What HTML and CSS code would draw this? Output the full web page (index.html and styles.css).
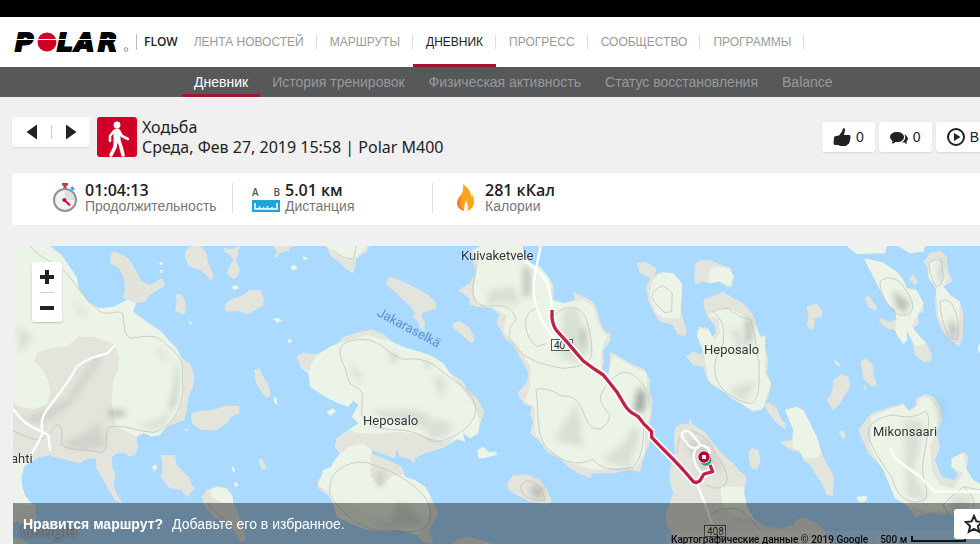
FILE: index.html
```
<!DOCTYPE html>
<html lang="ru">
<head>
    <meta charset="UTF-8">
    <meta name="viewport" content="width=device-width, initial-scale=1.0">
    <title>Polar Flow</title>
    <link rel="stylesheet" href="styles.css">
</head>
<body>
    <div class="top-strip"></div>

    <header class="header">
        <a href="#" class="logo" aria-label="Polar Flow">
            <svg class="logo-mark" width="116" height="24" viewBox="0 0 116 24">
                <text class="logo-text" x="1 43 61 84" y="21">PLAR</text>
                <circle cx="33" cy="12" r="9.500" fill="#d10027"/>
                <path d="M0 9.500H112" stroke="#fff" stroke-width="1.200"/>
                <circle cx="112" cy="19.500" r="1.800" fill="none" stroke="#777" stroke-width=".8"/>
            </svg>
            <span class="logo-flow">FLOW</span>
        </a>
        <nav class="main-nav">
            <a href="#">ЛЕНТА НОВОСТЕЙ</a>
            <a href="#">МАРШРУТЫ</a>
            <a href="#" class="active">ДНЕВНИК</a>
            <a href="#">ПРОГРЕСС</a>
            <a href="#">СООБЩЕСТВО</a>
            <a href="#">ПРОГРАММЫ</a>
        </nav>
    </header>

    <nav class="sub-nav">
        <a href="#" class="active">Дневник</a>
        <a href="#">История тренировок</a>
        <a href="#">Физическая активность</a>
        <a href="#">Статус восстановления</a>
        <a href="#">Balance</a>
    </nav>

    <main class="content">
        <div class="session-header">
            <div class="pager">
                <button type="button" aria-label="Назад"><svg width="12" height="16" viewBox="0 0 12 16"><path d="M11 .5V15.500L.5 8Z" fill="#222"/></svg></button>
                <button type="button" aria-label="Вперёд"><svg width="12" height="16" viewBox="0 0 12 16"><path d="M1 .5V15.500L11.500 8Z" fill="#222"/></svg></button>
            </div>
            <div class="sport-icon">
                <svg width="40" height="40" viewBox="0 0 40 40">
                    <circle cx="20" cy="8" r="3.400" fill="#fff"/>
                    <g fill="none" stroke="#fff" stroke-linecap="round" stroke-linejoin="round">
                        <path d="M20 15V23" stroke-width="7"/>
                        <path d="M17 14L13 19L13 24M22 14L25 19L31 22" stroke-width="2.600"/>
                        <path d="M18.500 24L18 30L14 38M22 24L24 30L26 38" stroke-width="3.600"/>
                    </g>
                </svg>
            </div>
            <h1 class="session-title">Ходьба<br>Среда, Фев 27, 2019 15:58 | Polar M400</h1>
            <div class="actions">
                <button type="button">
                    <svg width="18" height="18" viewBox="0 0 18 18"><path d="M1 10Q1 8 3 8L6 7.500L9 3.500L10 .5Q12.500-.5 12 2.500L11 7H16Q18 7 17.300 9Q18 10 17 11.500Q17.500 13 16.300 14Q16.500 16 14.500 16.500L13 18H7L5.500 17H2Q.5 17 .5 15Z" fill="#222"/></svg>
                    0
                </button>
                <button type="button">
                    <svg width="18" height="18" viewBox="0 0 18 18"><path d="M7 4C3 4 0 6 0 9Q0 11 2.500 13Q2.500 14.500 1.500 15.500Q4 15.500 5.500 14C11 14.500 14 12 14 9C14 6 11 4 7 4Z" fill="#222"/><path d="M14.500 6Q17.500 8 18 10.500Q18 12 16.500 13.500Q16.500 15 17 16Q15 15.500 14 14.300Q12.500 14.600 11.500 14.500Q17 12 14.500 6Z" fill="#222"/></svg>
                    0
                </button>
                <button type="button">
                    <svg width="18" height="18" viewBox="0 0 18 18"><circle cx="9" cy="9" r="8" fill="none" stroke="#222" stroke-width="2"/><path d="M7 5V13L13.500 9Z" fill="#222"/></svg>
                    В
                </button>
            </div>
        </div>

        <div class="summary">
            <div class="stat">
                <svg width="28" height="30" viewBox="0 0 28 30">
                    <path d="M10 1H16M13 1V5" stroke="#b83a4e" stroke-width="3"/>
                    <path d="M19.500 6.500L21.500 4.500" stroke="#1fa9d8" stroke-width="3.500"/>
                    <circle cx="13" cy="17" r="11" fill="#f1f2f2" stroke="#8e9193" stroke-width="2"/>
                    <path d="M13 7.500A9.500 9.500 0 0 1 22.500 17L13 17Z" fill="#dcdedf"/>
                    <path d="M12 16.500L18 22.500" stroke="#d10042" stroke-width="2"/>
                    <circle cx="12.300" cy="17" r="2" fill="#d10042"/>
                </svg>
                <div><strong>01:04:13</strong><span>Продолжительность</span></div>
            </div>
            <div class="stat">
                <div class="ruler">
                    <span>A</span><span>B</span>
                    <svg width="28" height="12" viewBox="0 0 28 12"><path d="M0 0H28V12H0Z" fill="#1fa3d8"/><path d="M3 3V9H25V3M7.500 6V9M11.500 7V9M15.500 6V9M20 7V9" fill="none" stroke="#fff" stroke-width="1.500"/></svg>
                </div>
                <div><strong>5.01 км</strong><span>Дистанция</span></div>
            </div>
            <div class="stat">
                <svg width="28" height="30" viewBox="0 0 28 30"><path d="M11 1C17 6 20 10 19 15L20.500 12C24 20 21 26 15.500 28Q17 24 15 20L14 17Q12 22 12 28C5 26 3 20 7 15C10 11 12 7 11 1Z" fill="#f8a51b"/><path d="M5 20Q6 15 9 12Q10 17 8.500 20Q8 24 12 28Q6 26 5 20Z" fill="#f4812a"/></svg>
                <div><strong>281 кКал</strong><span>Калории</span></div>
            </div>
        </div>

        <section class="map">
            <!-- three drawing units per screen pixel -->
            <svg class="map-canvas" viewBox="39 18 2901 894" preserveAspectRatio="xMinYMin slice">
                <defs>
                    <filter id="soft" x="-50%" y="-50%" width="200%" height="200%"><feGaussianBlur stdDeviation="9"/></filter>
                </defs>

                <!-- west: mainland and skerries -->
                <g>
                    <path class="land" d="M39 18L150 18 185 45 205 75 230 110 237 145 265 185 298 205 340 200 385 178 408 190 400 215 420 230 440 245 485 275 505 300 530 325 545 355 572 375 583 410 578 440 565 470 560 510 552 540 530 548 500 560 480 585 455 590 430 580 410 590 413 620 405 645 385 648 370 637 350 640 335 650 335 680 345 700 340 740 352 765 365 788 345 780 325 745 305 710 290 685 288 655 265 655 235 670 210 660 180 655 150 645 120 650 95 665 72 680 65 710 67 740 75 765 90 785 107 800 108 835 100 850 75 850 39 845Z"/>
                    <path class="sand" d="M108 340L150 325 200 320 235 290 280 290 315 300 345 315 358 350 355 390 340 420 335 480 340 520 350 560 410 590 413 620 405 645 385 648 370 637 350 640 335 650 335 680 345 700 340 740 352 765 365 788 345 780 325 745 305 710 290 685 288 655 265 655 235 670 180 655 150 645 120 650 95 665 39 650 39 490 60 500 100 508 140 495 150 460 145 420 120 380 105 365ZM545 355L572 375 583 410 578 440 565 470 560 510 552 540 500 560 535 520 550 480 552 400ZM108 800L108 835 100 850 39 845 39 790Z"/>
                    <path class="sand" d="M332 45L340 33 380 50 395 70 412 100 425 125 450 135 485 115 495 130 490 142 465 155 450 165 435 185 405 190 385 180 370 175 375 150 370 110 355 85 330 70ZM558 30L575 18 600 18 620 40 625 70 640 105 635 122 620 105 600 90 580 85 565 75 555 50ZM668 22L695 28 718 18 712 45 708 60 720 90 712 110 700 118 680 100 690 75 700 60 690 45 675 35ZM820 18L875 18 865 32 840 38 830 52 822 50 832 35ZM675 195L690 180 730 165 750 150 780 150 792 175 790 195 765 210 740 222 715 212 680 215 673 205ZM528 165L535 160 550 170 558 200 555 220 545 222 525 212 530 190ZM762 390L778 385 790 410 805 435 813 465 800 475 785 455 768 430ZM575 520L600 512 640 510 670 498 718 497 718 520 695 530 680 550 650 570 605 570 580 555 573 540ZM482 645L525 645 530 675 550 695 570 715 575 735 585 748 575 755 560 772 545 750 510 745 495 730 482 710 488 685ZM775 660L785 655 800 685 785 690ZM39 890L80 905 85 912 39 912Z"/>
                    <path class="sand" d="M605 770L620 750 650 738 680 745 697 765 700 790 715 820 730 860 738 900 720 905 700 870 680 850 640 830 615 800Z"/>
                    <path class="land" d="M630 750L655 740 682 748 697 768 700 790 660 785 635 770ZM695 140L710 135 718 145 702 150ZM820 237L835 233 845 242 832 248ZM870 80L885 75 893 85 878 93ZM908 53L920 52 922 58 912 59ZM862 300L872 297 875 305 865 310ZM478 66L488 66 488 74 479 74ZM480 90L490 90 488 100 481 98ZM566 243L575 245 572 256ZM820 470L830 475 832 495 823 488ZM455 680L468 672 472 685 462 695ZM695 680L702 682 706 696 698 695ZM702 728L710 725 715 738 705 740ZM553 570L562 566 565 573Z"/>
                    <g class="shade" filter="url(#soft)">
                        <path d="M525 350Q545 420 520 510L508 505Q535 420 525 350Z"/>
                        <path d="M325 510H375V530H325Z"/>
                        <path class="faint" d="M285 350L310 350 215 490 130 550 60 540 200 480ZM200 600Q260 590 300 545L315 620Q240 640 200 620ZM465 330L490 330 500 370ZM215 170Q240 210 270 220L240 225Z"/>
                        <path class="faint" d="M50 260L100 290 60 340ZM390 540Q450 570 510 510L500 550 450 570ZM340 50L400 150 410 175Z"/>
                    </g>
                    <path class="contour" d="M90 18C120 60 165 60 200 100C240 150 260 185 300 215C330 230 350 205 368 222C375 260 370 280 390 295C430 290 460 280 490 305C540 350 550 350 548 420C555 500 520 560 460 577C410 575 370 550 325 563C310 600 330 620 305 640C280 625 210 635 185 615C185 580 190 555 170 555C150 570 145 600 110 598C80 595 60 580 39 572M630 785Q620 800 650 820T695 860"/>
                    <path class="road" d="M345 315L322 340C290 350 270 350 230 380C205 430 170 470 140 510C115 545 130 570 125 585C115 610 105 625 92 645M39 508C65 540 85 560 120 572L145 585 150 632"/>
                </g>

                <!-- middle: Heposalo and Kuivaketvele -->
                <g transform="translate(900)">
                    <path class="land" d="M-10 350L10 338 50 345 90 320 115 310 130 292 170 278 215 270 250 282 275 305 320 325 360 335 400 350 430 370 450 400 490 425 500 450 530 475 553 515 540 550 535 580 510 595 490 580 495 605 470 598 435 620 400 632 370 640 345 655 345 670 325 655 300 650 290 625 285 655 260 645 215 630 215 645 260 660 305 680 315 710 345 720 375 740 390 765 400 790 415 815 405 840 385 870 400 912 370 905 350 885 300 870 260 875 200 870 150 850 110 830 100 790 85 765 55 745 55 720 75 700 90 690 100 665 120 640 105 620 110 595 145 570 175 550 155 530 175 495 160 482 145 500 115 490 75 470 30 440 25 400 5 385Z"/>
                    <path class="sand" d="M-10 350L10 338 50 348 35 370 28 395 5 385ZM115 310L130 292 170 278 215 270 250 282 270 305 200 285 150 300ZM145 570L180 580 230 582 300 575 360 585 430 605 470 590 435 620 370 640 345 655 345 670 325 655 300 650 290 625 285 655 215 630 190 610 150 620 125 640 105 620 110 595ZM212 640L260 660 305 680 312 705 280 705 240 740 212 710ZM85 700L90 765 55 745 55 720ZM390 770L400 790 415 815 405 840 385 870 400 912 370 905 350 885 385 850ZM450 400L490 425 500 450 530 475 553 515 540 550 525 500 490 450Z"/>
                    <path class="sand" d="M80 18L208 18 200 38 185 42 168 60 165 80 160 100 135 85 120 70 90 45ZM258 120L270 110 295 120 320 130 350 145 385 165 410 190 408 205 390 212 370 215 365 230 375 250 372 272 360 265 355 245 338 230 345 222 335 205 310 180 285 155 260 135ZM460 250L480 243 505 260 520 285 522 305 510 308 480 280 458 262ZM622 730L640 705 680 703 720 720 740 745 755 785 740 795 690 785 650 765 625 750ZM450 912L470 900 500 890 520 895 560 905 580 912Z"/>
                    <path class="land" d="M78 18L200 18 185 38 160 58 130 55 100 35ZM532 630L550 620 565 635 590 635 590 645 550 655 535 655ZM55 735L70 690 95 680 90 760ZM80 515L100 505 108 515 90 527ZM8 50L20 52 22 58 10 58Z"/>
                    <path class="sand" d="M515 30L545 18 668 18 672 50 700 75 720 80 748 115 762 140 760 180 790 190 825 180 820 155 840 165 880 185 890 205 900 245 915 275 932 280 930 305 910 330 912 365 905 385 925 405 930 335 960 350 1000 375 1030 385 1050 420 1050 460 1058 480 1055 520 1045 570 1050 610 1035 640 1020 695 985 690 940 700 880 700 870 715 835 700 810 685 780 655 745 640 715 600 690 580 700 545 690 525 695 500 670 490 652 460 680 430 685 400 670 370 640 315 615 295 600 265 588 245 600 225 575 205 530 200 510 195 508 175 475 150 510 130 525 100 520 60Z"/>
                    <path class="land" d="M525 30L545 18 668 18 672 50 700 75 720 80 748 115 755 140 752 180 790 190 825 182 850 180 880 200 890 240 910 275 922 285 905 330 905 385 925 408 938 345 1000 380 1040 400 1042 460 1050 520 1035 570 1035 640 1010 680 880 690 800 665 745 630 705 580 705 500 675 485 690 440 692 380 650 315 610 275 620 225 580 205 530 192 518 150 530 100Z"/>
                    <g class="shade" filter="url(#soft)">
                        <path d="M670 80L690 85 690 170 672 170ZM845 260L858 270 855 320 845 310ZM1020 430L1035 470 1030 510 1005 520Z"/>
                        <path d="M235 695L248 695 245 740 235 740ZM265 340L290 345 285 370ZM375 365L390 370 380 390Z"/>
                        <path class="faint" d="M145 360L200 430 160 410ZM220 510L350 510 400 530 370 560 240 530ZM400 400L440 430 420 480ZM370 560Q420 520 460 560 440 600 390 595ZM100 780Q150 830 270 850L300 780 380 850 260 870Z"/>
                        <path class="faint" d="M570 150L640 140 660 190 560 190ZM790 210L830 200 870 330 830 370 780 350ZM760 600L830 490 850 620ZM910 660L1000 580 990 690Z"/>
                        <path d="M690 740L730 740 725 780 700 765Z"/>
                    </g>
                    <path class="contour" d="M120 340C115 300 170 295 210 300C260 320 270 345 310 358C370 350 400 370 440 405C490 440 520 460 528 510C520 560 470 590 420 604C380 608 370 575 300 570C250 570 190 560 185 520C185 480 195 460 175 445C130 430 150 400 125 365ZM90 740C90 690 150 660 200 668C260 690 270 690 310 715C360 750 400 780 388 840C370 880 330 880 280 872C230 878 170 860 125 810C100 780 85 770 90 740M532 60L520 130C515 180 530 200 570 198C610 195 640 200 648 240C630 260 630 260 628 290C660 350 700 370 790 385C850 380 880 370 875 320C870 250 850 200 820 205C790 200 770 215 760 235M740 310L712 320C680 300 670 250 680 230C690 210 700 210 712 202M708 450C705 440 770 450 780 468C840 465 840 500 865 550C900 590 925 550 930 525C910 500 890 480 910 450C950 390 990 370 1040 450M708 450C720 530 700 600 760 640C810 680 850 670 880 658C900 690 960 695 1000 680C1040 640 1025 570 1035 530M662 740C670 715 700 720 725 745L735 780C690 785 665 770 662 740M100 30Q130 60 160 55L170 18"/>
                    <path class="road" d="M722 18C715 60 695 120 703 170C710 220 735 265 765 295M672 60C720 90 755 120 755 210"/>
                </g>

                <!-- east: second Heposalo, Mikonsaari and the route's far end -->
                <g transform="translate(1890)">
                    <path class="sand" d="M20 70L45 65 80 85 75 105 100 95 130 100 155 130 155 170 150 200 160 240 170 270 165 290 140 280 130 255 90 245 70 215 55 180 48 140 62 115 30 100ZM195 75L205 62 240 60 275 75 300 85 312 110 305 140 290 140 270 125 240 130 215 125 195 135 193 110ZM220 180L245 170 280 155 310 175 340 190 370 225 380 255 390 290 408 285 405 320 415 360 410 400 425 430 415 470 395 510 370 515 340 495 310 480 280 455 240 430 225 400 220 380 190 375 168 350 190 335 215 345 220 310 200 285 205 260 235 265 245 290 258 280 255 255 235 235 222 205ZM402 495L415 487 440 505 455 540 468 550 465 568 440 550 420 525ZM465 510L500 500 520 510 540 550 560 590 575 640 595 680 612 710 608 770 590 765 575 730 555 700 545 680 520 660 510 635 480 630 450 605 485 600 490 570ZM530 200L560 190 578 215 575 230 555 235 552 265 540 270 530 255 535 235ZM590 480L605 460 610 420 635 402 655 410 660 440 645 465 630 490 610 510 600 495ZM692 365L705 355 730 375 730 400 740 435 725 440 700 415ZM355 640L365 625 385 630 392 660 380 690 360 680ZM835 115L850 105 865 125 855 135ZM705 175L715 165 740 200 738 213 715 200ZM612 357L628 370 630 382 615 372ZM626 577L640 572 648 585 640 597ZM700 435L710 440 705 455Z"/>
                    <path class="sand" d="M702 55L760 68 800 95 820 120 830 145 860 150 880 190 880 218 860 215 868 250 850 265 870 290 895 320 905 345 903 365 880 365 855 345 848 310 830 270 832 300 820 315 805 290 795 270 770 265 748 245 750 235 780 245 800 240 795 210 770 190 750 150 735 115 715 85ZM880 65L900 40 930 32 950 50 955 90 967 125 940 140 960 165 990 185 1000 220 998 290 988 320 960 300 935 270 920 230 915 190 918 145 895 115 892 80ZM685 570L700 550 725 520 770 505 820 490 835 510 855 500 860 475 885 463 910 470 932 500 935 540 920 580 930 620 915 660 935 710 970 720 985 705 965 680 965 655 1000 635 1015 650 1010 690 1030 720 1050 730 1050 830 900 820 855 830 845 815 820 785 795 775 785 750 760 690 735 660 715 640 700 605ZM135 565L150 552 175 552 180 533 190 555 225 575 250 610 285 650 310 670 325 690 350 710 345 740 340 770 345 800 375 840 410 860 450 865 490 855 500 840 520 830 560 850 590 880 600 912 150 912 125 880 107 850 110 810 130 760 118 720 122 680 135 640 132 600Z"/>
                    <path class="land" d="M65 130L85 100 130 100 155 130 155 170 150 235 100 235 75 215 60 170ZM240 85L270 80 300 85 310 110 300 138 270 125 235 128ZM270 205L310 210 350 235 380 260 390 290 405 290 405 400 422 430 400 505 370 512 340 495 280 455 235 420 222 340 200 285 210 265 235 270 255 300 270 280 265 235 235 225ZM465 510L500 500 520 510 540 550 560 590 575 640 560 655 520 655 510 635 488 620 490 570ZM650 18L770 18 765 40 680 42ZM805 18L885 18 880 35 840 40ZM702 55L760 68 800 95 820 120 830 145 860 150 880 190 870 215 858 235 845 260 870 290 890 310 855 320 830 270 832 300 820 310 805 290 795 270 800 240 795 210 770 190 750 150ZM895 75L920 55 945 75 955 115 940 140 960 165 990 185 985 280 960 290 925 230 918 145 898 115ZM725 530L770 510 820 495 840 515 865 495 870 475 900 475 925 510 920 575 900 620 905 690 930 735 970 745 1000 700 965 680 965 655 1000 640 1010 690 1030 720 1050 735 1050 810 900 815 840 800 795 775 760 690 720 625ZM680 770L710 768 710 780 695 788 682 782ZM1045 315L1050 312 1050 340 1043 330ZM270 740L340 740 350 800 375 840 320 830 280 800Z"/>
                    <g class="shade" filter="url(#soft)">
                        <path d="M345 235L368 245 365 310 348 310ZM20 450L48 460 40 515 12 520ZM790 150L840 190 825 220 800 205ZM930 60L940 70 935 130 925 120ZM960 230L985 270 970 300 955 280Z"/>
                        <path class="faint" d="M300 260L330 270 345 330 320 330ZM290 450L380 420 350 485ZM160 600L230 600 280 690 210 690ZM820 540L880 540 870 620 850 690 890 780 830 770ZM930 560L940 490 910 480ZM0 560L30 570 10 650ZM320 810L350 830 330 850ZM960 770L1020 760 1020 820 970 820Z"/>
                    </g>
                    <path class="contour" d="M65 170Q70 145 100 137L127 160 125 215 105 218Q75 195 65 170M248 215Q290 240 280 310C240 370 250 420 285 455Q330 490 365 490C395 470 385 410 388 370C375 330 380 290 362 240Q320 230 295 205 265 205 248 215M750 125C770 105 810 115 820 140C850 180 855 200 840 220Q800 240 775 195 750 160 750 125M897 70Q915 50 935 65L940 110Q935 135 920 140 900 115 897 70M930 185Q955 170 970 200 990 240 982 300L960 295Q930 240 930 185M885 515Q900 520 895 560 890 610 880 660C870 720 900 740 888 775Q860 795 830 780 795 760 785 710C740 650 705 590 718 560Q740 530 790 525 850 540 885 515M1050 750L1000 740Q960 770 940 795L955 825M142 640C145 600 145 570 180 570Q240 590 255 640 290 680 292 720 280 760 225 735M1000 740Q1040 770 1030 800M220 850Q260 790 330 810 360 830 390 870"/>
                    <path class="road" d="M160 595Q145 575 175 572L205 605 210 615Q195 635 175 615ZM205 620Q180 640 200 680L215 700M200 730L225 790 245 850M210 615Q240 620 240 640M780 625C790 660 830 680 870 710L915 755 1050 755"/>
                </g>
            </svg>

            <span class="place kuivaketvele">Kuivaketvele</span>
            <span class="place heposalo-west">Heposalo</span>
            <span class="place heposalo-east">Heposalo</span>
            <span class="place mikonsaari">Mikonsaari</span>
            <span class="place lahti">ahti</span>
            <span class="place water-name">Jakaraselkä</span>
            <span class="shield shield-north">40</span>
            <span class="shield shield-south">408</span>

            <!-- recorded route, drawn over the labels -->
            <svg class="map-canvas" viewBox="39 18 2901 894" preserveAspectRatio="xMinYMin slice">
                <path class="route-casing" d="M1656 210L1656 235Q1660 260 1670 272L1700 305 1730 340 1750 363 1780 385 1810 405 1830 430 1850 455 1865 480Q1880 508 1895 518L1915 530 1930 550 1955 575 1955 592 1990 628 2020 658 2050 690 2080 725 2088 728 2100 722 2112 702 2138 695 2130 675"/>
                <path class="route" d="M1656 210L1656 235Q1660 260 1670 272L1700 305 1730 340 1750 363 1780 385 1810 405 1830 430 1850 455 1865 480Q1880 508 1895 518L1915 530 1930 550 1955 575 1955 592 1990 628 2020 658 2050 690 2080 725 2088 728 2100 722 2112 702 2138 695 2130 675"/>
                <circle cx="2117" cy="660" r="17" fill="#3f9d76"/>
                <circle cx="2112" cy="651" r="19" fill="#fff"/>
                <circle cx="2112" cy="651" r="17" fill="#b8002e"/>
                <path d="M2106 645H2118V657H2106Z" fill="#fff"/>
            </svg>

            <div class="zoom">
                <button type="button" aria-label="Увеличить"><svg width="14" height="14" viewBox="0 0 14 14"><path d="M0 7H14M7 0V14" stroke="#222" stroke-width="4"/></svg></button>
                <button type="button" aria-label="Уменьшить"><svg width="14" height="14" viewBox="0 0 14 14"><path d="M0 7H14" stroke="#222" stroke-width="4"/></svg></button>
            </div>

            <span class="google">Google</span>
            <div class="attribution">
                <span>Картографические данные © 2019 Google</span>
                <span class="scale">500 м <i></i></span>
            </div>

            <div class="favourite-bar">
                <p><strong>Нравится маршрут?</strong>Добавьте его в избранное.</p>
                <button type="button" aria-label="В избранное"><svg width="20" height="20" viewBox="0 0 20 20"><path d="M10 2L12.400 7.400 18.300 8 13.900 12 15.200 17.800 10 14.800 4.800 17.800 6.100 12 1.700 8 7.600 7.400Z" fill="none" stroke="#222" stroke-width="2"/></svg></button>
            </div>
        </section>
    </main>
</body>
</html>
```

FILE: styles.css
```
* {
    box-sizing: border-box;
}
body {
    margin: 0;
    min-height: 100vh;
    display: flex;
    flex-direction: column;
    overflow-x: hidden;
    background-color: #f0f0f0;
    color: #222;
    font-family: "Liberation Sans", Arial, sans-serif;
    font-size: 14px;
}
a {
    text-decoration: none;
}
button {
    border: none;
    padding: 0;
    background: #fff;
    color: #222;
    font: inherit;
    cursor: pointer;
}
svg {
    display: block;
    flex: none;
}

/* Header */
.top-strip {
    height: 17px;
    background-color: #000;
}
.header {
    display: flex;
    height: 50px;
    padding-left: 14px;
    background-color: #fff;
}
.logo {
    display: flex;
    align-items: center;
    gap: 6px;
    color: #222;
}
.logo-mark {
    overflow: visible;
}
.logo-text {
    font: italic bold 25px "DejaVu Sans", sans-serif;
    stroke: #000;
    stroke-width: 2;
}
.logo-flow {
    padding-left: 7px;
    border-left: 1px solid #bbb;
    font: 600 12px/16px "Open Sans", sans-serif;
}
.main-nav {
    display: flex;
    margin-left: 3px;
}
.main-nav a {
    display: flex;
    align-items: center;
    padding: 0 13px;
    position: relative;
    color: #999;
    font-size: 12px;
}
.main-nav a::after {
    content: "";
    position: absolute;
    right: 0;
    top: 18px;
    width: 1px;
    height: 14px;
    background-color: #ddd;
}
.main-nav .active {
    color: #222;
    box-shadow: inset 0 -3px #a3142f;
}
.sub-nav {
    display: flex;
    height: 30px;
    padding-left: 182px;
    background-color: #565859;
}
.sub-nav a {
    padding: 0 12px;
    color: #999;
    line-height: 30px;
}
.sub-nav .active {
    border-bottom: 3px solid #a3142f;
    border-radius: 2px;
    color: #fff;
}

/* Session title row */
.content {
    flex: 1;
    display: flex;
    flex-direction: column;
    padding-left: 12px;
}
.session-header {
    display: flex;
    height: 76px;
    padding-top: 20px;
}
.pager {
    display: flex;
    width: 78px;
    height: 30px;
    background-color: #fff;
    border-radius: 3px;
    box-shadow: 0 1px 2px rgba(0, 0, 0, 0.1);
}
.pager button {
    flex: 1;
    display: flex;
    align-items: center;
    justify-content: center;
    background: none;
}
.pager button + button {
    background: linear-gradient(#ccc, #ccc) 0 8px / 1px 14px no-repeat;
}
.sport-icon {
    width: 40px;
    height: 40px;
    margin: 0 5px 0 7px;
    border-radius: 3px;
    background-color: #d10027;
}
.session-title {
    margin: 0;
    font: 16px/20px "Noto Sans", sans-serif;
    white-space: nowrap;
}
.actions {
    display: flex;
    gap: 4px;
    margin: 5px -10px 0 auto;
}
.actions button {
    display: flex;
    align-items: center;
    gap: 5px;
    height: 30px;
    padding: 0 11px;
    border-radius: 3px;
    box-shadow: 0 1px 2px rgba(0, 0, 0, 0.1);
}

/* Summary */
.summary {
    display: flex;
    height: 52px;
    padding-left: 20px;
    background-color: #fff;
}
.stat {
    display: flex;
    align-items: center;
    gap: 5px;
    width: 200px;
    height: 30px;
    margin-top: 10px;
    padding-left: 19px;
}
.stat:first-child {
    padding-left: 20px;
}
.stat + .stat {
    border-left: 1px solid #ddd;
}
.stat strong,
.stat > div > span {
    display: block;
}
.stat strong {
    font: 600 16px/16px "Open Sans", sans-serif;
}
.stat > div > span {
    color: #777;
    line-height: 16px;
}
.stat .ruler {
    display: flex;
    flex-wrap: wrap;
    justify-content: space-between;
    width: 28px;
}
.stat .ruler span {
    color: #555;
    font: 600 10px/16px "Open Sans", sans-serif;
}

/* Map */
.map {
    flex: 1;
    position: relative;
    min-height: 298px;
    margin: 21px 0 0 1px;
    overflow: hidden;
    background-color: #aadaff;
}
.map-canvas {
    position: absolute;
    width: 100%;
    height: 100%;
}
.land {
    fill: #ebf4e7;
}
.sand {
    fill: #e3e4dc;
}
.shade path {
    fill: #7d8580;
    opacity: 0.45;
}
.shade .faint {
    opacity: 0.18;
}
.contour {
    fill: none;
    stroke: #b9bdb4;
    stroke-width: 2;
}
.road {
    fill: none;
    stroke: #fff;
    stroke-width: 7;
}
.route-casing,
.route {
    fill: none;
    stroke-linejoin: round;
}
.route-casing {
    stroke: #fff;
    stroke-width: 20;
}
.route {
    stroke: #bd2248;
    stroke-width: 10;
}
.place {
    position: absolute;
    color: #333;
    font: 13px/16px Roboto, sans-serif;
    text-shadow: 0 0 2px #fff;
}
.kuivaketvele {
    left: 448px;
    top: 2px;
}
.heposalo-west {
    left: 350px;
    top: 167px;
}
.heposalo-east {
    left: 691px;
    top: 96px;
}
.mikonsaari {
    left: 860px;
    top: 178px;
}
.lahti {
    left: -2px;
    top: 205px;
}
.water-name {
    left: 361px;
    top: 74px;
    color: #5b8fd0;
    text-shadow: none;
    transform: rotate(28deg);
}
.shield {
    position: absolute;
    width: 22px;
    height: 12px;
    padding-left: 2px;
    border: 1px solid #555;
    background-color: #f4f6f0;
    color: #222;
    font: 10px/11px Roboto, sans-serif;
}
.shield-north {
    left: 538px;
    top: 93px;
}
.shield-south {
    left: 691px;
    top: 279px;
}
.zoom {
    position: absolute;
    left: 19px;
    top: 16px;
    width: 30px;
    height: 60px;
    padding: 0 8px;
    border-radius: 3px;
    background-color: #fff;
    box-shadow: 0 1px 2px rgba(0, 0, 0, 0.2);
}
.zoom button {
    display: flex;
    align-items: center;
    width: 100%;
    height: 30px;
}
.zoom button + button {
    border-top: 1px solid #ccc;
}
.google {
    position: absolute;
    left: 7px;
    bottom: 2px;
    color: rgba(255, 255, 255, 0.6);
    font: 500 18px/22px Roboto, sans-serif;
    text-shadow: 0 0 2px #666;
}
.attribution {
    position: absolute;
    right: 0;
    bottom: 0;
    display: flex;
    width: 314px;
    height: 13px;
    padding-left: 5px;
    background-color: rgba(255, 255, 255, 0.2);
    color: #111;
    font: 500 10px/17px Roboto, sans-serif;
    white-space: nowrap;
}
.scale {
    display: flex;
    gap: 4px;
    margin-left: 5px;
    padding-left: 6px;
    border-left: 1px solid #ccc;
}
.scale i {
    width: 55px;
    height: 6px;
    margin-top: 5px;
    border: 2px solid #222;
    border-top: none;
}
.favourite-bar {
    position: absolute;
    left: 0;
    right: 0;
    bottom: 0;
    display: flex;
    align-items: center;
    justify-content: space-between;
    height: 41px;
    padding-left: 10px;
    background-color: rgba(0, 0, 0, 0.4);
    color: #fff;
}
.favourite-bar p {
    margin: 0;
}
.favourite-bar strong {
    margin-right: 9px;
}
.favourite-bar button {
    height: 30px;
    margin-right: -14px;
    padding: 0 10px;
    border-radius: 3px;
}
```
